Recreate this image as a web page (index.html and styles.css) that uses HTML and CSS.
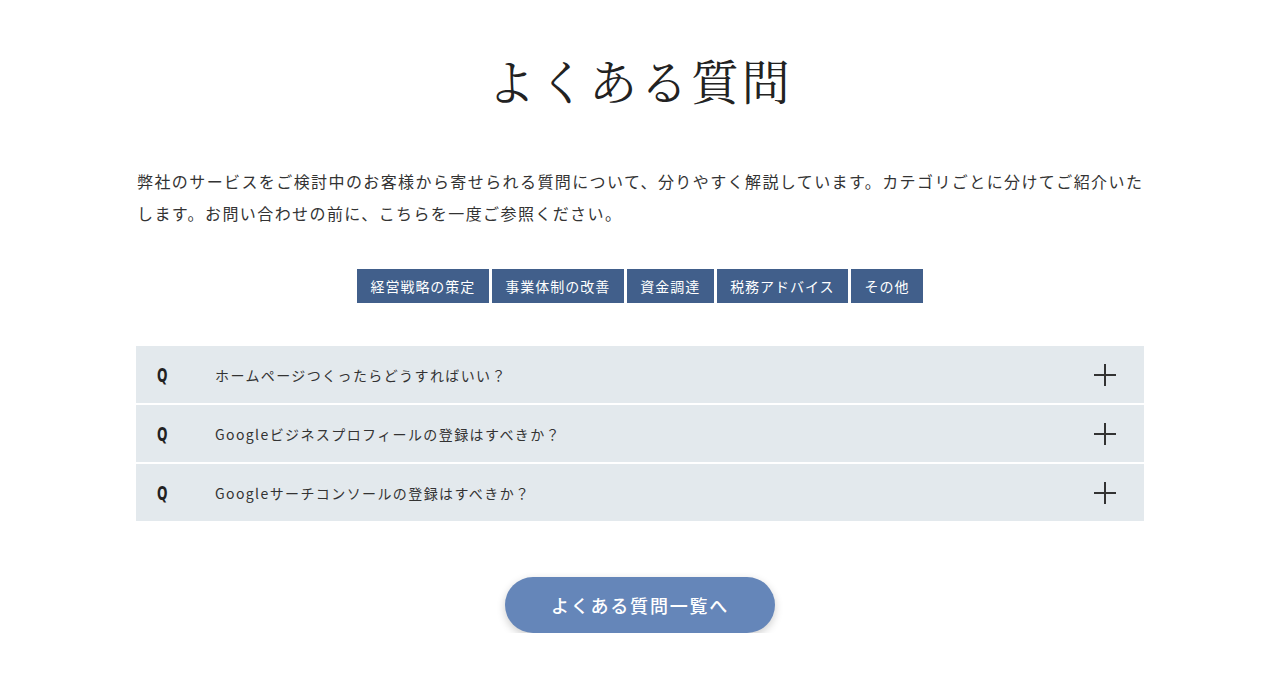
FILE: index.html
```html
<!DOCTYPE html>
<html lang="ja">
<head>
    <meta charset="UTF-8">
    <meta name="viewport" content="width=device-width, initial-scale=1.0">
    <title>よくある質問</title>
    <link rel="stylesheet" href="styles.css">
</head>
<body>

    <section class="faq-section">
        <h2 class="faq-title">よくある質問</h2>
        <p class="faq-lead">弊社のサービスをご検討中のお客様から寄せられる質問について、分りやすく解説しています。カテゴリごとに分けてご紹介いたします。お問い合わせの前に、こちらを一度ご参照ください。</p>

        <ul class="faq-tabs">
            <li><a href="#">経営戦略の策定</a></li>
            <li><a href="#">事業体制の改善</a></li>
            <li><a href="#">資金調達</a></li>
            <li><a href="#">税務アドバイス</a></li>
            <li><a href="#">その他</a></li>
        </ul>

        <div class="faq-list">
            <div class="faq-item">
                <span class="faq-q">Q</span>
                <span class="faq-question">ホームページつくったらどうすればいい？</span>
                <span class="faq-toggle"></span>
            </div>
            <div class="faq-item">
                <span class="faq-q">Q</span>
                <span class="faq-question">Googleビジネスプロフィールの登録はすべきか？</span>
                <span class="faq-toggle"></span>
            </div>
            <div class="faq-item">
                <span class="faq-q">Q</span>
                <span class="faq-question">Googleサーチコンソールの登録はすべきか？</span>
                <span class="faq-toggle"></span>
            </div>
        </div>

        <div class="faq-more">
            <a href="#" class="more-button">よくある質問一覧へ</a>
        </div>
    </section>

</body>
</html>
```

FILE: styles.css
```css
body {
    margin: 0;
    background-color: #fff;
    color: #333;
    font-family: "Noto Sans CJK JP", "Noto Sans", sans-serif;
}

.faq-section {
    width: 1008px;
    margin: 0 auto;
    padding-top: 48px;
}

.faq-title {
    margin: 0;
    text-align: center;
    font-family: "Noto Serif CJK JP", "Liberation Serif", "Noto Sans CJK JP", serif;
    font-size: 48px;
    font-weight: 400;
    line-height: 64px;
    letter-spacing: 0.06em;
    color: #222;
}

.faq-lead {
    margin: 53px 0 0;
    padding-left: 1px;
    font-size: 16px;
    line-height: 32px;
    letter-spacing: 0.088em;
}

.faq-tabs {
    list-style: none;
    margin: 40px 0 0;
    padding: 0;
    display: flex;
    justify-content: center;
    gap: 3px;
}

.faq-tabs a {
    display: block;
    height: 34px;
    line-height: 34px;
    padding: 0 13.5px;
    background-color: #415f8b;
    color: #fff;
    font-size: 14px;
    letter-spacing: 0.07em;
    text-decoration: none;
}

.faq-list {
    margin-top: 43px;
    display: flex;
    flex-direction: column;
    gap: 2px;
}

.faq-item {
    display: flex;
    align-items: center;
    height: 57px;
    padding: 0 28px 0 21px;
    background-color: #e3e9ed;
}

.faq-q {
    width: 58px;
    font-family: "DejaVu Sans Condensed", "DejaVu Sans", sans-serif;
    font-weight: bold;
    font-size: 19px;
    color: #222;
    transform: scaleX(0.72);
    transform-origin: left center;
}

.faq-question {
    flex: 1;
    font-size: 14px;
    letter-spacing: 0.1em;
    color: #333;
}

.faq-toggle {
    position: relative;
    width: 22px;
    height: 22px;
}

.faq-toggle::before,
.faq-toggle::after {
    content: "";
    position: absolute;
    background-color: #333;
}

.faq-toggle::before {
    left: 0;
    top: 10px;
    width: 22px;
    height: 2px;
}

.faq-toggle::after {
    left: 10px;
    top: 0;
    width: 2px;
    height: 22px;
}

.faq-more {
    margin-top: 56px;
    display: flex;
    justify-content: center;
}

.more-button {
    display: block;
    width: 270px;
    height: 56px;
    line-height: 56px;
    border-radius: 28px;
    background-color: #6586b9;
    color: #fff;
    text-align: center;
    font-size: 18px;
    font-weight: 500;
    letter-spacing: 0.1em;
    text-decoration: none;
    box-shadow: 0 3px 8px rgba(0, 0, 0, 0.2);
}
```
